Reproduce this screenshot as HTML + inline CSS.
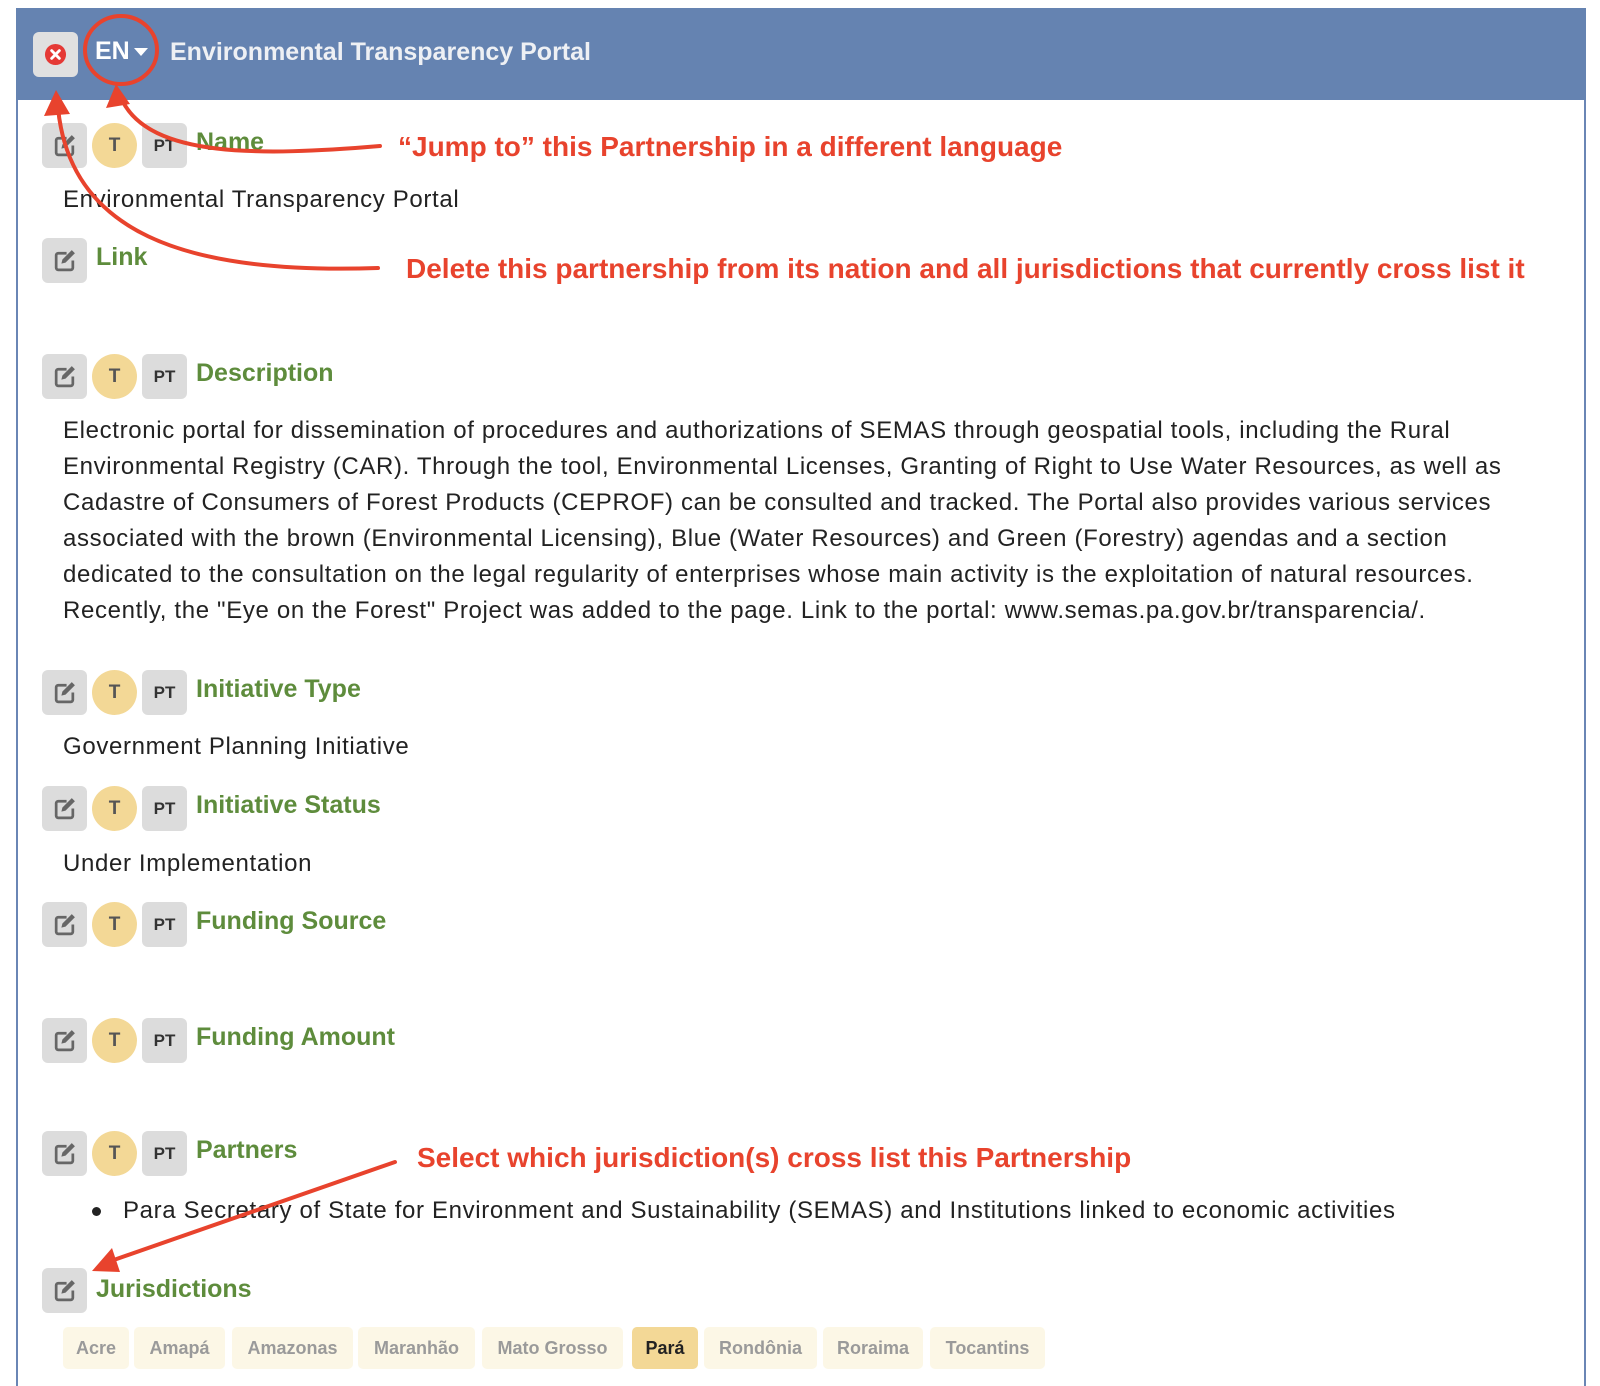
<!DOCTYPE html>
<html><head><meta charset="utf-8"><style>
*{margin:0;padding:0;box-sizing:border-box}
html,body{width:1600px;height:1386px;overflow:hidden}
body{background:#fff;font-family:"Liberation Sans",sans-serif;position:relative;color:#222}
.panel{position:absolute;left:16px;top:8px;width:1570px;height:1378px;border:2px solid #6a86b5;border-bottom:none}
.hdr{position:absolute;left:16px;top:8px;width:1570px;height:92px;background:#6583b1}
.a{position:absolute}
.btn{position:absolute;width:45px;height:45px;background:#dcdcdc;border-radius:6px}
.tc{position:absolute;width:45px;height:45px;background:#f3d896;border-radius:50%;font-weight:bold;font-size:19px;color:#555;text-align:center;line-height:45px}
.pt{position:absolute;width:45px;height:45px;background:#dcdcdc;border-radius:6px;font-weight:bold;font-size:17px;color:#333;text-align:center;line-height:45px}
.lbl{position:absolute;font-weight:bold;font-size:25px;color:#5e8c3c;white-space:nowrap}
.txt{position:absolute;left:63px;font-size:24px;letter-spacing:0.65px;white-space:nowrap;color:#222}
.ann{position:absolute;font-weight:bold;font-size:28px;color:#e8432d;white-space:nowrap}
.tag{position:absolute;top:1327px;height:42px;line-height:42px;background:#fcf7e6;border-radius:5px;font-weight:bold;font-size:18px;color:#9a9a9a;text-align:center}
</style></head><body>
<div class="panel"></div>
<div class="hdr"></div>
<div class="btn" style="left:33px;top:32px;background:#e0e0e0"></div>
<svg class="a" style="left:44px;top:43px" width="23" height="23" viewBox="0 0 24 24"><circle cx="12" cy="12" r="11" fill="#e53935"/><path d="M8 8l8 8M16 8l-8 8" stroke="#fff" stroke-width="3" stroke-linecap="round"/></svg>
<div class="a" style="left:95px;top:37px;font-weight:bold;font-size:25px;color:#fff">EN</div>
<svg class="a" style="left:134px;top:48px" width="14" height="8"><path d="M0 0h14L7 8z" fill="#fff"/></svg>
<div class="a" style="left:170px;top:38px;font-weight:bold;font-size:25px;color:#eef0f4">Environmental Transparency Portal</div>

<div class="btn" style="left:42px;top:123px"></div><div class="tc" style="left:92px;top:123px">T</div><div class="pt" style="left:142px;top:123px">PT</div><div class="lbl" style="left:196px;top:128px">Name</div>
<div class="txt" style="top:186px">Environmental Transparency Portal</div>
<div class="btn" style="left:42px;top:238px"></div><div class="lbl" style="left:96px;top:243px">Link</div>
<div class="btn" style="left:42px;top:354px"></div><div class="tc" style="left:92px;top:354px">T</div><div class="pt" style="left:142px;top:354px">PT</div><div class="lbl" style="left:196px;top:359px">Description</div>
<div class="txt" style="top:413px;line-height:36px">Electronic portal for dissemination of procedures and authorizations of SEMAS through geospatial tools, including the Rural<br>Environmental Registry (CAR). Through the tool, Environmental Licenses, Granting of Right to Use Water Resources, as well as<br>Cadastre of Consumers of Forest Products (CEPROF) can be consulted and tracked. The Portal also provides various services<br>associated with the brown (Environmental Licensing), Blue (Water Resources) and Green (Forestry) agendas and a section<br>dedicated to the consultation on the legal regularity of enterprises whose main activity is the exploitation of natural resources.<br>Recently, the "Eye on the Forest" Project was added to the page. Link to the portal: www.semas.pa.gov.br/transparencia/.</div>
<div class="btn" style="left:42px;top:670px"></div><div class="tc" style="left:92px;top:670px">T</div><div class="pt" style="left:142px;top:670px">PT</div><div class="lbl" style="left:196px;top:675px">Initiative Type</div>
<div class="txt" style="top:733px">Government Planning Initiative</div>
<div class="btn" style="left:42px;top:786px"></div><div class="tc" style="left:92px;top:786px">T</div><div class="pt" style="left:142px;top:786px">PT</div><div class="lbl" style="left:196px;top:791px">Initiative Status</div>
<div class="txt" style="top:850px">Under Implementation</div>
<div class="btn" style="left:42px;top:902px"></div><div class="tc" style="left:92px;top:902px">T</div><div class="pt" style="left:142px;top:902px">PT</div><div class="lbl" style="left:196px;top:907px">Funding Source</div>
<div class="btn" style="left:42px;top:1018px"></div><div class="tc" style="left:92px;top:1018px">T</div><div class="pt" style="left:142px;top:1018px">PT</div><div class="lbl" style="left:196px;top:1023px">Funding Amount</div>
<div class="btn" style="left:42px;top:1131px"></div><div class="tc" style="left:92px;top:1131px">T</div><div class="pt" style="left:142px;top:1131px">PT</div><div class="lbl" style="left:196px;top:1136px">Partners</div>
<div class="a" style="left:92px;top:1207px;width:9px;height:9px;border-radius:50%;background:#222"></div>
<div class="txt" style="left:123px;top:1197px">Para Secretary of State for Environment and Sustainability (SEMAS) and Institutions linked to economic activities</div>
<div class="btn" style="left:42px;top:1268px"></div><div class="lbl" style="left:96px;top:1275px">Jurisdictions</div>

<div class="tag" style="left:63px;width:66px">Acre</div>
<div class="tag" style="left:134px;width:91px">Amapá</div>
<div class="tag" style="left:232px;width:121px">Amazonas</div>
<div class="tag" style="left:358px;width:117px">Maranhão</div>
<div class="tag" style="left:482px;width:141px">Mato Grosso</div>
<div class="tag" style="left:632px;width:66px;background:#f3d896;color:#222">Pará</div>
<div class="tag" style="left:704px;width:113px">Rondônia</div>
<div class="tag" style="left:823px;width:100px">Roraima</div>
<div class="tag" style="left:930px;width:115px">Tocantins</div>

<svg width="0" height="0" style="position:absolute"><defs><g id="ed"><path d="M14 5H6a2 2 0 0 0-2 2v12a2 2 0 0 0 2 2h12a2 2 0 0 0 2-2v-7" fill="none" stroke="#666" stroke-width="2.6"/><path d="M19 2l3 3-9 9-4 1 1-4z" fill="#666"/></g></defs></svg>
<svg class="a" style="left:52px;top:133px" width="25" height="25" viewBox="0 0 24 24"><use href="#ed"/></svg>
<svg class="a" style="left:52px;top:248px" width="25" height="25" viewBox="0 0 24 24"><use href="#ed"/></svg>
<svg class="a" style="left:52px;top:364px" width="25" height="25" viewBox="0 0 24 24"><use href="#ed"/></svg>
<svg class="a" style="left:52px;top:680px" width="25" height="25" viewBox="0 0 24 24"><use href="#ed"/></svg>
<svg class="a" style="left:52px;top:796px" width="25" height="25" viewBox="0 0 24 24"><use href="#ed"/></svg>
<svg class="a" style="left:52px;top:912px" width="25" height="25" viewBox="0 0 24 24"><use href="#ed"/></svg>
<svg class="a" style="left:52px;top:1028px" width="25" height="25" viewBox="0 0 24 24"><use href="#ed"/></svg>
<svg class="a" style="left:52px;top:1141px" width="25" height="25" viewBox="0 0 24 24"><use href="#ed"/></svg>
<svg class="a" style="left:52px;top:1278px" width="25" height="25" viewBox="0 0 24 24"><use href="#ed"/></svg>

<div class="ann" style="left:398px;top:131px">“Jump to” this Partnership in a different language</div>
<div class="ann" style="left:406px;top:253px">Delete this partnership from its nation and all jurisdictions that currently cross list it</div>
<div class="ann" style="left:417px;top:1142px">Select which jurisdiction(s) cross list this Partnership</div>

<svg class="a" style="left:0;top:0" width="1600" height="1386">
<g fill="none" stroke="#e8432d" stroke-width="4" stroke-linecap="round">
<ellipse cx="121" cy="50" rx="36" ry="34"/>
<path d="M380 146 C 260 156 150 158 122 100"/>
<path d="M378 268 C 180 275 70 230 58 108"/>
<path d="M395 1162 L 108 1262"/>
</g>
<g fill="#e8432d">
<path d="M116 84 L106 108 L130 104 Z"/>
<path d="M56 90 L44 116 L70 114 Z"/>
<path d="M92 1271 L112 1248 L120 1272 Z"/>
</g>
</svg>
</body></html>
